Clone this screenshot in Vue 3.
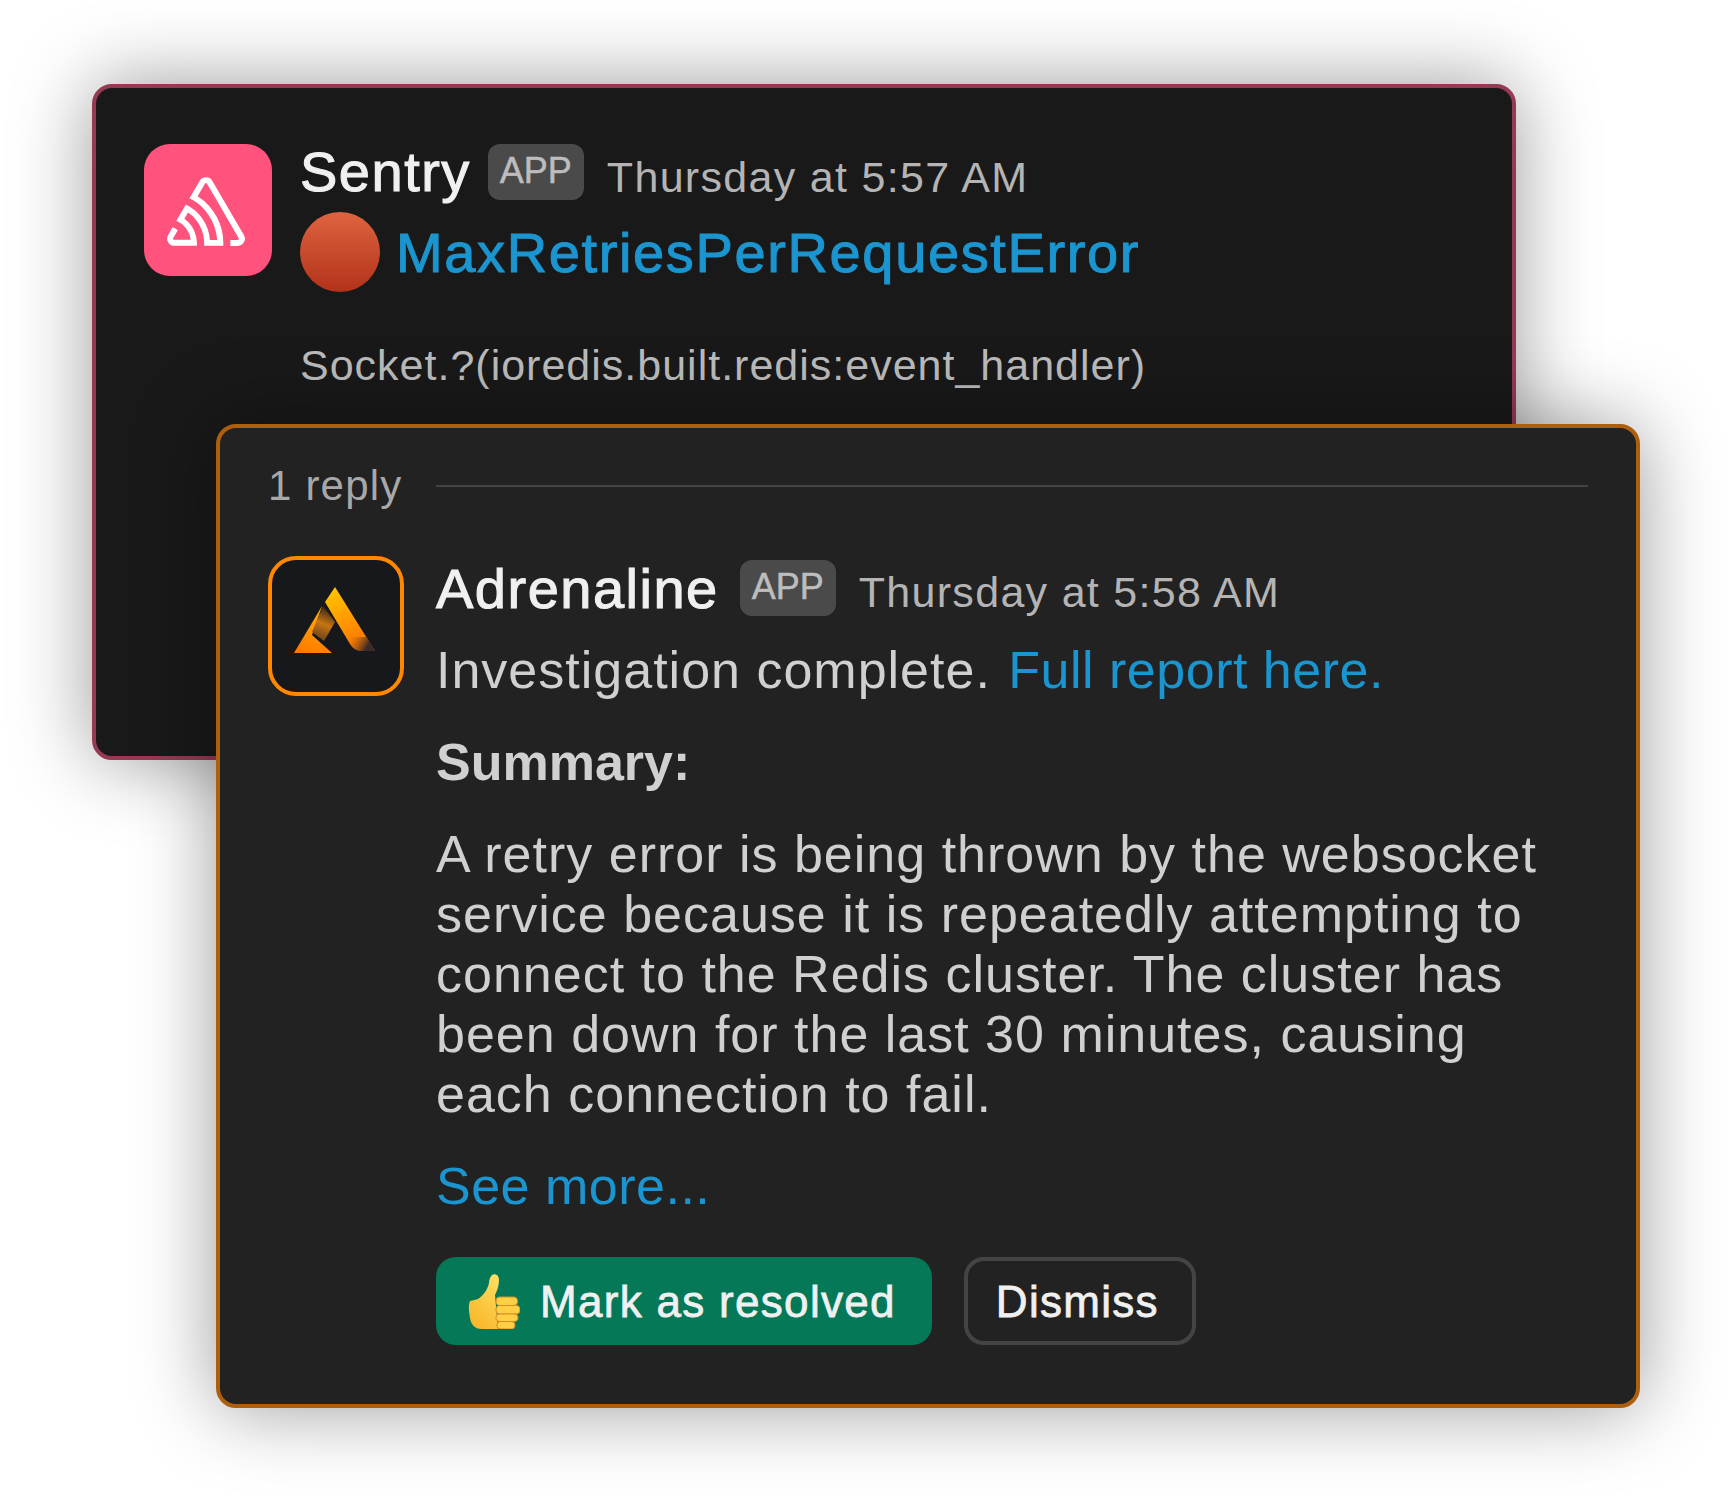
<template>
  <div class="stage">
    <section class="card card-back">
      <div class="msg">
        <div class="sentry-icon">
          <svg viewBox="0 0 50 44" width="78" height="69">
            <path fill="#fff" d="M29,2.26a4.67,4.67,0,0,0-8,0L14.42,13.53A32.21,32.21,0,0,1,32.17,40.19H27.55A27.68,27.68,0,0,0,12.09,17.47L6,28a15.92,15.92,0,0,1,9.23,12.17H4.62A.76.76,0,0,1,4,39.06l2.94-5a10.74,10.74,0,0,0-3.36-1.9l-2.91,5a4.54,4.54,0,0,0,1.69,6.24A4.66,4.66,0,0,0,4.62,44H19.15a19.4,19.4,0,0,0-8-17.31l2.31-4A23.87,23.87,0,0,1,23.76,44H36.07a35.88,35.88,0,0,0-16.41-31.8l4.67-8a.77.77,0,0,1,1.05-.27c.53.29,20.29,34.77,20.66,35.17a.76.76,0,0,1-.68,1.13H40.6q.09,1.91,0,3.81h4.78A4.59,4.59,0,0,0,50,39.43a4.49,4.49,0,0,0-.62-2.28Z" />
          </svg>
        </div>
        <div class="msg-body">
          <div class="head head-back">
            <span class="name">Sentry</span>
            <span class="badge">APP</span>
            <span class="time">Thursday at 5:57 AM</span>
          </div>
          <div class="issue">
            <span class="dot"></span>
            <a class="issue-link">MaxRetriesPerRequestError</a>
          </div>
          <p class="culprit">Socket.?(ioredis.built.redis:event_handler)</p>
        </div>
      </div>
    </section>

    <section class="card card-front">
      <div class="replies">
        <span>1 reply</span>
        <i class="rule"></i>
      </div>
      <div class="msg msg-front">
        <div class="adr-icon">
          <svg viewBox="0 0 100 80" width="100" height="80">
            <defs>
              <linearGradient id="adrRight" gradientUnits="userSpaceOnUse" x1="44" y1="8" x2="76" y2="72">
                <stop offset="0" stop-color="#ffc800" />
                <stop offset="0.6" stop-color="#ff9000" />
                <stop offset="1" stop-color="#f87000" />
              </linearGradient>
              <linearGradient id="adrFade" gradientUnits="userSpaceOnUse" x1="62" y1="56" x2="88" y2="72">
                <stop offset="0" stop-color="#ff8000" stop-opacity="0" />
                <stop offset="0.75" stop-color="#3a2a28" />
              </linearGradient>
              <linearGradient id="adrLeft" gradientUnits="userSpaceOnUse" x1="36" y1="28" x2="20" y2="73">
                <stop offset="0" stop-color="#ffb000" />
                <stop offset="1" stop-color="#ff7a00" />
              </linearGradient>
              <linearGradient id="adrFold" gradientUnits="userSpaceOnUse" x1="44" y1="28" x2="32" y2="56">
                <stop offset="0" stop-color="#33221c" />
                <stop offset="0.55" stop-color="#c87410" />
                <stop offset="1" stop-color="#7a4a1a" />
              </linearGradient>
            </defs>
            <path fill="url(#adrLeft)" d="M37 26 L9 73 L47 73 L27 55 Z" />
            <path fill="url(#adrFold)" d="M38 26 L27 52 L39 61 L50 42 Z" />
            <path fill="url(#adrRight)" d="M50 7 L40 22 L65 64 Q69 71 77 71 L90 71 Z" />
            <path fill="url(#adrFade)" d="M61 57 L65 64 Q69 71 77 71 L90 71 L82 57 Z" />
          </svg>
        </div>
        <div class="msg-body">
          <div class="head head-front">
            <span class="name">Adrenaline</span>
            <span class="badge">APP</span>
            <span class="time">Thursday at 5:58 AM</span>
          </div>
          <p class="line first">Investigation complete. <a class="link">Full report here.</a></p>
          <p class="line summary">Summary:</p>
          <p class="line text">A retry error is being thrown by the websocket service because it is repeatedly attempting to connect to the Redis cluster. The cluster has been down for the last 30 minutes, causing each connection to fail.</p>
          <p class="line more"><a class="link">See more...</a></p>
          <div class="actions">
            <button class="btn btn-primary">
              <svg viewBox="0 0 52 55" width="52" height="55" class="thumb">
                <defs>
                  <linearGradient id="thumbFill" x1="0.7" y1="0" x2="0.2" y2="1">
                    <stop offset="0" stop-color="#ffdc5e" />
                    <stop offset="1" stop-color="#f7b527" />
                  </linearGradient>
                </defs>
                <path fill="url(#thumbFill)" d="M24 1c3-2 7 0 7 5 0 6-2 11-4 15l3 34H14C6 55 3 50 2 44 1 38 0 32 2 27c3-1 6-1 8-2 5-3 10-10 11-16 0-3 1-6 3-8Z" />
                <g fill="#ffcf45" stroke="#d98e22" stroke-width="1.1">
                  <rect x="28" y="23" width="21.5" height="8.5" rx="4" />
                  <rect x="28" y="31.5" width="24" height="8.5" rx="4" />
                  <rect x="28" y="40" width="22" height="7.5" rx="3.7" />
                  <rect x="29" y="47.5" width="18" height="7.5" rx="3.7" />
                </g>
              </svg>
              <span>Mark as resolved</span>
            </button>
            <button class="btn btn-ghost"><span>Dismiss</span></button>
          </div>
        </div>
      </div>
    </section>
  </div>
</template>

<script setup>
</script>

<style>
html, body {
  background: #fff;
}
</style>

<style scoped>
.stage {
  width: 1732px;
  height: 1508px;
  box-sizing: border-box;
  padding: 84px 92px 0;
  overflow: hidden;
  font-family: "Liberation Sans", Arial, sans-serif;
}
.card {
  box-sizing: border-box;
  width: 1424px;
  border-radius: 20px;
  border: 4px solid;
  box-shadow: 0 0 80px rgba(0, 0, 0, 0.4);
}
.card-back {
  height: 676px;
  background: #191919;
  border-color: #963a54;
  padding: 56px 46px 0 48px;
}
.card-front {
  position: relative;
  height: 984px;
  margin: -336px 0 0 124px;
  background: #222222;
  border-color: #ae5f0e;
  padding: 28px 48px 0 48px;
}
.msg {
  display: flex;
}
.sentry-icon {
  flex: none;
  box-sizing: border-box;
  width: 128px;
  height: 132px;
  margin-right: 28px;
  border-radius: 26px;
  background: #ff527d;
  display: flex;
  align-items: center;
  justify-content: center;
  padding: 3px 4px 0 0;
}
.msg-body {
  flex: 1;
  min-width: 0;
}
.head {
  display: flex;
  align-items: center;
  height: 58px;
}
.name {
  font-size: 56px;
  letter-spacing: 1.5px;
  color: #f0f0f0;
  -webkit-text-stroke: 1.1px #f0f0f0;
}
.badge {
  margin-left: 21px;
  box-sizing: border-box;
  width: 96px;
  height: 56px;
  line-height: 54px;
  text-align: center;
  border-radius: 12px;
  background: #4a4a4a;
  color: #bdbdbd;
  font-size: 36px;
  -webkit-text-stroke: 0.5px #bdbdbd;
}
.time {
  margin: 8px 0 0 23px;
  color: #b4b4b4;
  font-size: 43px;
  letter-spacing: 1.3px;
}
.head-back .name {
  margin-top: -3px;
}
.head-back .badge {
  margin: -2px 0 0 17px;
}
.head-front {
  height: 60px;
  margin-top: 2px;
}
.issue {
  display: flex;
  align-items: center;
  margin-top: 10px;
}
.dot {
  width: 80px;
  height: 80px;
  border-radius: 50%;
  background: linear-gradient(#de643f, #b2321a);
  margin-right: 16px;
}
.issue-link {
  color: #1b95d0;
  font-size: 56px;
  letter-spacing: 1.63px;
  -webkit-text-stroke: 1px #1b95d0;
}
.culprit {
  margin: 49px 0 0;
  color: #bcbcbc;
  font-size: 43px;
  letter-spacing: 1px;
}
.replies {
  display: flex;
  align-items: center;
  color: #a8a8a8;
  font-size: 42px;
  letter-spacing: 1.2px;
  height: 60px;
}
.rule {
  flex: 1;
  height: 2px;
  margin-left: 34px;
  background: #444;
}
.msg-front {
  margin-top: 40px;
}
.adr-icon {
  flex: none;
  box-sizing: border-box;
  width: 136px;
  height: 140px;
  margin-right: 32px;
  padding: 0 2px 12px 0;
  border: 4px solid #ff8800;
  border-radius: 28px;
  background: #17181c;
  display: flex;
  align-items: center;
  justify-content: center;
}
.line {
  margin: 0;
  color: #d0d0d0;
  font-size: 52px;
  line-height: 60px;
  letter-spacing: 1px;
}
.first {
  margin-top: 22px;
}
.link {
  color: #1b95d0;
  letter-spacing: 0.5px;
}
.first .link {
  margin-left: 2px;
}
.summary {
  margin-top: 32px;
  font-weight: 700;
  letter-spacing: 0;
}
.text {
  margin-top: 32px;
  max-width: 1115px;
}
.more {
  margin-top: 32px;
}
.actions {
  display: flex;
  gap: 32px;
  margin-top: 41px;
}
.btn {
  box-sizing: border-box;
  height: 88px;
  border-radius: 20px;
  font-family: inherit;
  font-size: 44px;
  letter-spacing: 1.3px;
  color: #f0f0f0;
  -webkit-text-stroke: 0.8px #f0f0f0;
  display: flex;
  align-items: center;
}
.btn span {
  padding-top: 2px;
}
.btn-primary {
  background: #047857;
  border: 0;
  padding: 0 36px 0 32px;
}
.thumb {
  margin-right: 20px;
}
.btn-ghost {
  background: transparent;
  border: 4px solid #444;
  padding: 0 33px 0 28px;
}
</style>
